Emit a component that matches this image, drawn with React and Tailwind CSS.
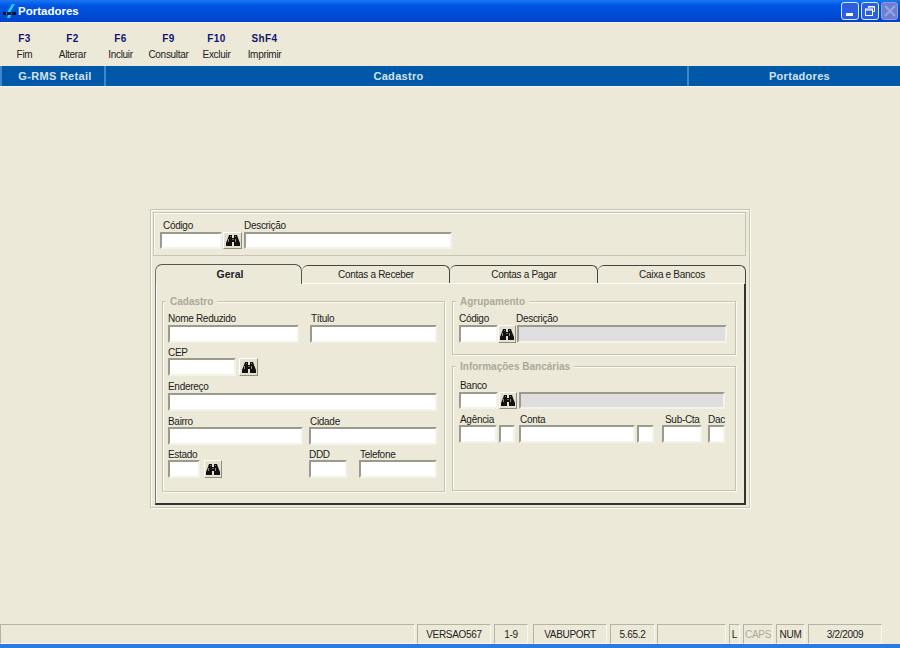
import React from 'react';

const Binoculars = () => (
    <svg width="14" height="13" viewBox="0 0 14 13">
        <path d="M3 1h3v3h2V1h3l1 3 2 5v3H8V8H6v4H0V9l2-5z" fill="#111" />
        <rect x="2" y="5" width="1" height="3" fill="#8a8a80" />
        <rect x="9" y="5" width="1" height="3" fill="#8a8a80" />
        <rect x="6" y="5" width="2" height="1" fill="#6a6a60" />
        <rect x="4" y="2" width="1" height="1" fill="#77776c" />
        <rect x="9" y="2" width="1" height="1" fill="#77776c" />
    </svg>
);

const AppIcon = () => (
    <svg width="15" height="15" viewBox="0 0 15 15">
        <path d="M10 0h3L7 10H4z" fill="#19d3e8" />
        <path d="M6 11h3l-1 3H5z" fill="#19d3e8" />
        <rect x="1" y="8" width="3" height="3" fill="#101030" />
        <rect x="5" y="8" width="4" height="3" fill="#101030" />
        <rect x="10" y="8" width="4" height="3" fill="#101030" />
    </svg>
);

const Input = ({ className = '' }) => (
    <div className={`h-full box-border border-2 border-t-[#9c9a8c] border-l-[#9c9a8c] border-r-[#f4f3ea] border-b-[#f4f3ea] ${className}`} />
);

const Field = ({ label, width, height = 'h-[18px]', grey, labelClass = '' }) => (
    <div className={`flex flex-col shrink-0 ${width}`}>
        <div className={`h-[14px] leading-[16px] whitespace-nowrap text-[#1c1c1c] ${labelClass}`}>{label || '\u00a0'}</div>
        <div className={height}>
            <Input className={grey ? 'bg-[#dedede]' : 'bg-white'} />
        </div>
    </div>
);

const SearchButton = ({ width = 'w-[19px]', height = 'h-[18px]', className = '' }) => (
    <div className={`${width} ${height} shrink-0 flex items-center justify-center bg-[#e4e1d0] border border-t-white border-l-white border-r-[#8f8d80] border-b-[#8f8d80] ${className}`}>
        <Binoculars />
    </div>
);

const Group = ({ title, className, children }) => (
    <div className={`relative border border-[#c6c4b4] shadow-[inset_1px_1px_0_#fbfaf3,1px_1px_0_#fbfaf3] ${className}`}>
        <div className="absolute -top-[7px] left-[3px] h-[14px] leading-[14px] px-[4px] bg-[#ece9d8] text-[#aca899] font-bold tracking-normal">{title}</div>
        {children}
    </div>
);

const toolbar = [
    ['F3', 'Fim'],
    ['F2', 'Alterar'],
    ['F6', 'Incluir'],
    ['F9', 'Consultar'],
    ['F10', 'Excluir'],
    ['ShF4', 'Imprimir']
];

const statusCells = [
    { text: '', w: 'w-[415px]', m: '' },
    { text: 'VERSAO567', w: 'w-[74px]', m: 'ml-[2px]' },
    { text: '1-9', w: 'w-[34px]', m: 'ml-[3px]' },
    { text: 'VABUPORT', w: 'w-[74px]', m: 'ml-[5px]' },
    { text: '5.65.2', w: 'w-[45px]', m: 'ml-[3px]' },
    { text: '', w: 'w-[69px]', m: 'ml-[2px]' },
    { text: 'L', w: 'w-[11px]', m: 'ml-[3px]' },
    { text: 'CAPS', w: 'w-[30px]', m: 'ml-[3px]', off: true },
    { text: 'NUM', w: 'w-[29px]', m: 'ml-[3px]' },
    { text: '3/2/2009', w: 'w-[74px]', m: 'ml-[3px]' }
];

const tabs = ['Contas a Receber', 'Contas a Pagar', 'Caixa e Bancos'];

const App = () => {
    return (
        <div className="w-[900px] h-[648px] overflow-hidden flex flex-col bg-[#ece9d8] font-['Liberation_Sans',sans-serif] text-[10px] tracking-[-0.3px]">
            {/* barra de titulo */}
            <div className="h-[23px] shrink-0 flex items-center pl-[2px] pr-[2px] bg-gradient-to-b from-[#1a78f0] via-[#0055e5] via-25% to-[#0044c8] border-b border-[#f4f3ea]">
                <AppIcon />
                <div className="ml-[1px] pt-[2px] text-white font-bold text-[11.5px] tracking-normal">Portadores</div>
                <div className="ml-auto flex gap-[2px]">
                    <div className="w-[18px] h-[18px] rounded-[3px] border border-[#dfe6fa] bg-[#2c5fe0] flex items-end pl-[4px] pb-[3px]">
                        <div className="w-[7px] h-[3px] bg-white" />
                    </div>
                    <div className="w-[18px] h-[18px] rounded-[3px] border border-[#dfe6fa] bg-[#2c5fe0] flex items-center justify-center">
                        <svg width="12" height="12" viewBox="0 0 12 12" fill="none" stroke="#fff">
                            <path d="M4.5 3V1.5h6v5H8.5" />
                            <rect x="1.5" y="4" width="7" height="6.5" />
                            <path d="M1.5 5h7M4.5 2h6" />
                        </svg>
                    </div>
                    <div className="w-[17px] h-[18px] rounded-[3px] border border-[#8f9fe0] bg-[#6c7fd2] flex items-center justify-center">
                        <svg width="12" height="12" viewBox="0 0 12 12" stroke="#9aa6dc" strokeWidth="2">
                            <path d="M1 1l10 10M11 1L1 11" />
                        </svg>
                    </div>
                </div>
            </div>

            {/* teclas de funcao */}
            <div className="h-[43px] shrink-0 flex pt-[9px]">
                {toolbar.map(([key, label]) => (
                    <div key={key} className="w-12 pl-px flex flex-col items-center">
                        <div className="h-[14px] leading-[14px] font-bold text-[#14146e] tracking-[0.4px]">{key}</div>
                        <div className="mt-[2px] h-[14px] leading-[14px] text-[#222]">{label}</div>
                    </div>
                ))}
            </div>

            {/* faixa azul */}
            <div className="h-[21px] shrink-0 flex bg-[#0058a8] text-[#d5e2ee] font-bold text-[11px] tracking-[0.3px] border-b border-[#f8f7ee]">
                <div className="w-[106px] pl-[4px] flex items-center justify-center border-l-2 border-r-2 border-[#3f86c6]">G-RMS Retail</div>
                <div className="w-[581px] pl-[4px] flex items-center justify-center">Cadastro</div>
                <div className="flex-1 pl-[10px] flex items-center justify-center border-l-2 border-[#3f86c6]">Portadores</div>
            </div>

            {/* formulario */}
            <div className="flex-1 flex justify-center pt-[122px]">
                <div className="w-[600px] h-[299px] border border-[#c6c4b4] shadow-[inset_1px_1px_0_#fbfaf3,1px_1px_0_#fbfaf3] pl-[2px] pt-[2px]">
                    <div className="w-[593px] h-[44px] border border-[#c6c4b4] shadow-[inset_1px_1px_0_#fbfaf3] pl-[6px] pt-[5px] flex">
                        <Field label="Código" width="w-[62px]" labelClass="ml-[3px]" height="h-[17px]" />
                        <SearchButton className="mt-[14px] ml-px" height="h-[17px]" />
                        <Field label="Descrição" width="w-[208px] ml-[2px]" height="h-[17px]" />
                    </div>

                    <div className="ml-[2px] w-[591px] mt-[8px]">
                        <div className="flex h-[19px] items-end">
                            <div className="relative z-10 w-[147px] h-[20px] -mb-px pl-[3px] rounded-t-[7px] bg-[#ece9d8] border-t border-l border-r border-t-[#555] border-l-[#777] border-r-[#555] flex items-center justify-center font-bold text-[10.5px] tracking-normal text-[#222]">
                                Geral
                            </div>
                            {tabs.map((tab) => (
                                <div key={tab} className="w-[148px] h-[18px] pl-px rounded-t-[6px] bg-[#ece9d8] border-t border-r border-t-[#444] border-r-[#444] flex items-center justify-center text-[#222]">
                                    {tab}
                                </div>
                            ))}
                        </div>

                        <div className="w-[591px] h-[222px] box-border border-t border-t-white border-l border-l-[#777] border-r-2 border-r-[#333] border-b-2 border-b-[#333] shadow-[inset_1px_0_0_#fbfaf3] pl-[6px] pt-[17px] flex gap-[7px]">
                            <Group title="Cadastro" className="w-[283px] h-[191px] pl-[5px] pt-[9px]">
                                <div className="flex gap-[11px]">
                                    <Field label="Nome Reduzido" width="w-[131px]" />
                                    <Field label="Título" width="w-[127px]" labelClass="ml-px" />
                                </div>
                                <div className="flex items-end mt-px">
                                    <Field label="CEP" width="w-[68px]" labelClass="pt-px" />
                                    <SearchButton className="ml-[3px]" />
                                </div>
                                <div className="mt-[3px]">
                                    <Field label="Endereço" width="w-[269px]" labelClass="leading-[14px]" />
                                </div>
                                <div className="flex gap-[6px] mt-[2px]">
                                    <Field label="Bairro" width="w-[135px]" labelClass="pt-px" />
                                    <Field label="Cidade" width="w-[128px]" labelClass="ml-px pt-px" />
                                </div>
                                <div className="flex items-end mt-px">
                                    <Field label="Estado" width="w-[32px]" labelClass="pt-px" />
                                    <SearchButton width="w-[18px]" className="ml-[4px]" />
                                    <Field label="DDD" width="w-[38px] ml-[87px]" labelClass="pt-px" />
                                    <Field label="Telefone" width="w-[78px] ml-[12px]" labelClass="ml-px pt-px" />
                                </div>
                            </Group>

                            <div className="flex flex-col gap-[11px]">
                                <Group title="Agrupamento" className="w-[284px] h-[54px] pl-[6px] pt-[9px]">
                                    <div className="flex items-end">
                                        <Field label="Código" width="w-[39px]" />
                                        <SearchButton width="w-[18px]" />
                                        <Field label="Descrição" width="w-[210px] ml-px" labelClass="-ml-px" grey />
                                    </div>
                                </Group>
                                <Group title="Informações Bancárias" className="w-[284px] h-[125px] pl-[6px] pt-[11px]">
                                    <div className="flex items-end">
                                        <Field label="Banco" width="w-[39px]" height="h-[17px]" labelClass="ml-px" />
                                        <SearchButton width="w-[18px]" height="h-[17px]" className="ml-px" />
                                        <Field label="" width="w-[206px] ml-[2px]" height="h-[17px]" grey />
                                    </div>
                                    <div className="flex mt-[2px]">
                                        <Field label="Agência" width="w-[38px]" labelClass="ml-px pt-px" />
                                        <Field label="" width="w-[16px] ml-[2px]" />
                                        <Field label="Conta" width="w-[116px] ml-[4px]" labelClass="ml-px pt-px" />
                                        <Field label="" width="w-[17px] ml-[2px]" />
                                        <Field label="Sub-Cta" width="w-[40px] ml-[8px]" labelClass="ml-[3px] pt-px" />
                                        <Field label="Dac" width="w-[17px] ml-[6px]" labelClass="pt-px" />
                                    </div>
                                </Group>
                            </div>
                        </div>
                    </div>
                </div>
            </div>

            {/* barra de status */}
            <div className="h-[20px] shrink-0 flex">
                {statusCells.map((cell, i) => (
                    <div key={i} className={`${cell.w} ${cell.m} shrink-0 flex items-center justify-center border-t border-l border-t-[#b5b3a4] border-l-[#b5b3a4] border-r border-b border-r-[#f8f7ee] border-b-[#f8f7ee] ${cell.off ? 'text-[#aca899]' : 'text-[#222]'}`}>
                        {cell.text}
                    </div>
                ))}
            </div>
            <div className="h-[4px] shrink-0 bg-[#2a7ae0]" />
        </div>
    );
};

export default App;
